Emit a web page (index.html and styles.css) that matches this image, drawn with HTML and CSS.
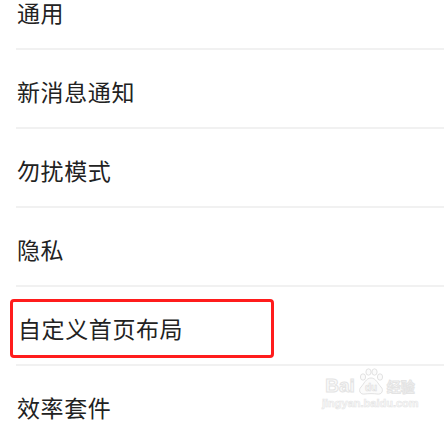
FILE: index.html
```html
<!DOCTYPE html>
<html>
<head>
    <meta charset="UTF-8">
    <meta name="viewport" content="width=device-width, initial-scale=1.0">
    <title>设置</title>
    <link rel="stylesheet" href="styles.css">
</head>
<body>
    <ul class="settingList">
        <li class="settingItem">通用</li>
        <li class="settingItem">新消息通知</li>
        <li class="settingItem">勿扰模式</li>
        <li class="settingItem">隐私</li>
        <li class="settingItem">
            <div class="markBox">自定义首页布局</div>
        </li>
        <li class="settingItem">效率套件</li>
    </ul>

    <div class="watermark">
        <div class="brand">
            <span class="brandText">Bai</span>
            <svg class="paw" width="30" height="28" viewBox="0 0 30 28">
                <ellipse cx="7" cy="9" rx="2.6" ry="3.2" />
                <ellipse cx="12.5" cy="4" rx="2.6" ry="3.2" />
                <ellipse cx="18.5" cy="4" rx="2.6" ry="3.2" />
                <ellipse cx="24" cy="9" rx="2.6" ry="3.2" />
                <path d="M15 10 C10 10 8 16 5 19 C2 22 4 27 9 26 C12 25.5 18 25.5 21 26 C26 27 28 22 25 19 C22 16 20 10 15 10 Z" />
                <text x="15" y="23" text-anchor="middle">du</text>
            </svg>
            <span class="brandText cn">经验</span>
        </div>
        <div class="site">jingyan.baidu.com</div>
    </div>
</body>
</html>
```

FILE: styles.css
```css
html, body {
    margin: 0;
    padding: 0;
    background: #ffffff;
    height: 100%;
    overflow: hidden;
}

body {
    font-family: "Noto Sans CJK SC", "Noto Sans", sans-serif;
    color: #222222;
}

.settingList {
    list-style: none;
    margin: -29px 0 0 0;
    padding: 0;
}

.settingItem {
    box-sizing: border-box;
    height: 79px;
    margin-left: 16px;
    padding-top: 4px;
    padding-left: 1px;
    border-bottom: 2px solid #f1f1f1;
    display: flex;
    align-items: center;
    font-size: 23px;
    letter-spacing: 0.6px;
}

.markBox {
    box-sizing: border-box;
    width: 264px;
    height: 59px;
    margin-left: -7px;
    margin-top: 1px;
    padding-left: 5px;
    border: 3px solid #ff1c1c;
    border-radius: 4px;
    display: flex;
    align-items: center;
}

/* watermark sits over the list */
.watermark {
    position: absolute;
    left: 322px;
    top: 368px;
    width: 96px;
    text-align: center;
    white-space: nowrap;
}

.brand {
    display: flex;
    align-items: flex-end;
    justify-content: center;
    height: 28px;
}

.brandText {
    font-family: "Liberation Sans", sans-serif;
    font-weight: bold;
    font-size: 19px;
    line-height: 20px;
    color: #fbfbfb;
    -webkit-text-stroke: 1px #e4e4e4;
}

.brandText.cn {
    font-family: "Noto Sans CJK SC", sans-serif;
    font-size: 14px;
    line-height: 18px;
    margin-bottom: 1px;
}

.paw {
    margin: 0 1px;
    flex: none;
}

.paw ellipse,
.paw path {
    fill: #fbfbfb;
    stroke: #e2e2e2;
    stroke-width: 1;
}

.paw text {
    font-family: "Liberation Sans", sans-serif;
    font-weight: bold;
    font-size: 10px;
    fill: #fbfbfb;
    stroke: #dedede;
    stroke-width: 0.6;
}

.site {
    font-family: "Liberation Sans", sans-serif;
    font-size: 11px;
    font-weight: bold;
    color: #fafafa;
    -webkit-text-stroke: 0.6px #e6e6e6;
    margin-top: 1px;
}
```
